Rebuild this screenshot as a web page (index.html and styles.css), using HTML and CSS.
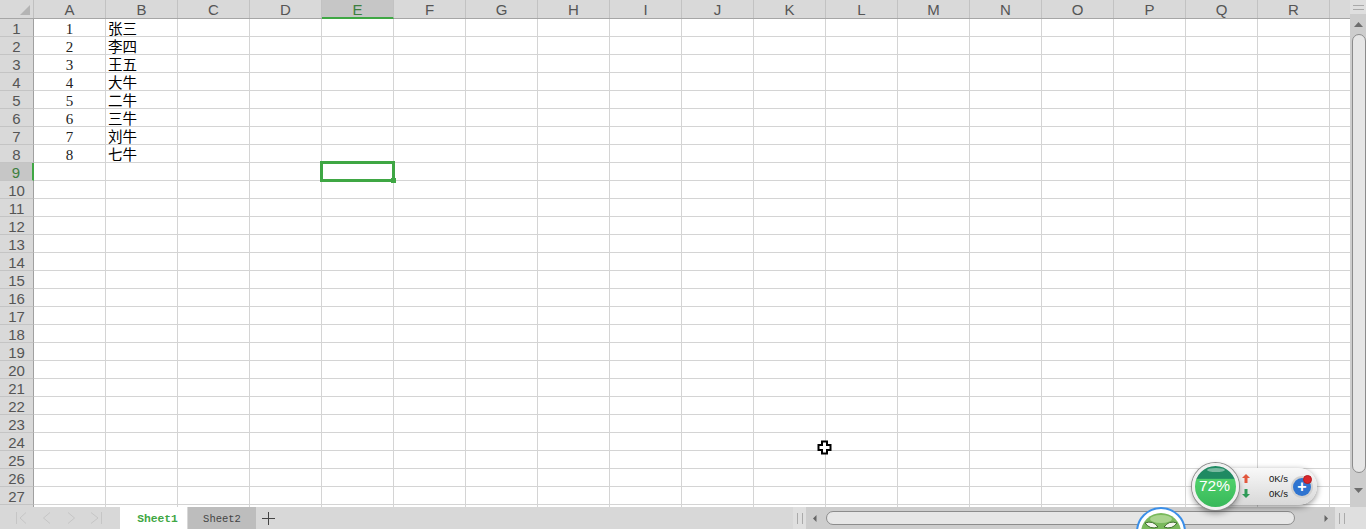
FILE: index.html
```html
<!DOCTYPE html>
<html lang="zh-CN">
<head>
<meta charset="utf-8">
<title>Sheet1</title>
<link rel="stylesheet" href="styles.css">
</head>
<body>
<div class="app">
  <div class="main">
    <div class="grid">
      <div class="colhead">
        <div class="corner"><svg width="12" height="12" viewBox="0 0 12 12"><path d="M11 1V11H1Z" fill="#b4b4b4"/></svg></div>
        <div class="col">A</div><div class="col">B</div><div class="col">C</div><div class="col">D</div>
        <div class="col active">E</div><div class="col">F</div><div class="col">G</div><div class="col">H</div>
        <div class="col">I</div><div class="col">J</div><div class="col">K</div><div class="col">L</div>
        <div class="col">M</div><div class="col">N</div><div class="col">O</div><div class="col">P</div>
        <div class="col">Q</div><div class="col">R</div><div class="col tail"></div>
      </div>
      <div class="rows">
        <div class="row"><div class="rh">1</div><div class="num">1</div><div class="name">张三</div></div>
        <div class="row"><div class="rh">2</div><div class="num">2</div><div class="name">李四</div></div>
        <div class="row"><div class="rh">3</div><div class="num">3</div><div class="name">王五</div></div>
        <div class="row"><div class="rh">4</div><div class="num">4</div><div class="name">大牛</div></div>
        <div class="row"><div class="rh">5</div><div class="num">5</div><div class="name">二牛</div></div>
        <div class="row"><div class="rh">6</div><div class="num">6</div><div class="name">三牛</div></div>
        <div class="row"><div class="rh">7</div><div class="num">7</div><div class="name">刘牛</div></div>
        <div class="row"><div class="rh">8</div><div class="num">8</div><div class="name">七牛</div></div>
        <div class="row"><div class="rh active">9</div></div>
        <div class="row"><div class="rh">10</div></div>
        <div class="row"><div class="rh">11</div></div>
        <div class="row"><div class="rh">12</div></div>
        <div class="row"><div class="rh">13</div></div>
        <div class="row"><div class="rh">14</div></div>
        <div class="row"><div class="rh">15</div></div>
        <div class="row"><div class="rh">16</div></div>
        <div class="row"><div class="rh">17</div></div>
        <div class="row"><div class="rh">18</div></div>
        <div class="row"><div class="rh">19</div></div>
        <div class="row"><div class="rh">20</div></div>
        <div class="row"><div class="rh">21</div></div>
        <div class="row"><div class="rh">22</div></div>
        <div class="row"><div class="rh">23</div></div>
        <div class="row"><div class="rh">24</div></div>
        <div class="row"><div class="rh">25</div></div>
        <div class="row"><div class="rh">26</div></div>
        <div class="row"><div class="rh">27</div></div>
        <div class="row"><div class="rh"></div></div>
      </div>
    </div>
    <div class="vscroll">
      <div class="vsplit"></div>
      <div class="varrow"><svg width="9" height="5" viewBox="0 0 9 5"><path d="M4.500 0L9 5H0Z" fill="#6e6e6e"/></svg></div>
      <div class="vthumb"></div>
      <div class="varrow down"><svg width="9" height="5" viewBox="0 0 9 5"><path d="M0 0H9L4.500 5Z" fill="#6e6e6e"/></svg></div>
    </div>
  </div>
  <div class="tabbar">
    <div class="nav">
      <svg width="120" height="22" viewBox="0 0 120 22" fill="none" stroke="#c6c6c6" stroke-width="1"><path d="M16.500 5V17M26 5.500L20 11L26 16.500M50 5.500L43.500 11L50 16.500M68 5.500L74.500 11L68 16.500M91 5.500L98 11L91 16.500M101.500 5V17"/></svg>
    </div>
    <div class="tab current">Sheet1</div>
    <div class="tab">Sheet2</div>
    <div class="plus"><svg width="13" height="13" viewBox="0 0 13 13"><path d="M6.500 0V13M0 6.500H13" stroke="#444" stroke-width="1"/></svg></div>
    <div class="spacer"></div>
    <div class="hsplit"></div>
    <div class="hscroll">
      <svg class="harrow" width="5" height="9" viewBox="0 0 5 9"><path d="M4.500 1V8L1 4.500Z" fill="#666"/></svg>
      <div class="hthumb"></div>
      <svg class="harrow" width="5" height="9" viewBox="0 0 5 9"><path d="M.5 1V8L4 4.500Z" fill="#666"/></svg>
    </div>
    <div class="hsplit end"></div>
  </div>

  <div class="selection"><span class="handle"></span></div>

  <svg class="cursor" width="15" height="15" viewBox="0 0 15 15"><path d="M5 1.500H10V5H13.500V10H10V13.500H5V10H1.500V5H5Z" fill="#fff" stroke="#000" stroke-width="2"/></svg>

  <div class="mascot">
    <svg width="50" height="50" viewBox="0 0 50 50">
      <circle cx="25" cy="25" r="24" fill="#fff" stroke="#3b8fe8" stroke-width="2"/>
      <circle cx="25" cy="26" r="20" fill="#79b95c"/>
      <ellipse cx="25" cy="12" rx="11" ry="4" fill="#a9d48e"/>
      <path d="M9 16Q17 13 22 20Q14 23 9 16ZM41 16Q33 13 28 20Q36 23 41 16Z" fill="#f4f6ee" stroke="#3c6e2a" stroke-width="1"/>
    </svg>
  </div>

  <div class="widget">
    <div class="ball"><span class="gloss"></span><span class="pct">72%</span></div>
    <div class="speeds">
      <div class="speed"><svg width="8" height="9" viewBox="0 0 8 9"><path d="M4 0L8 4H5.500V9H2.500V4H0Z" fill="#e2583e"/></svg><span>0K/s</span></div>
      <div class="speed"><svg width="8" height="9" viewBox="0 0 8 9"><path d="M4 9L8 5H5.500V0H2.500V5H0Z" fill="#2f9a57"/></svg><span>0K/s</span></div>
    </div>
    <div class="boost"><span class="boost-plus">+</span><span class="dot"></span></div>
  </div>
</div>
</body>
</html>
```
FILE: styles.css
```css
* { box-sizing: border-box; }
html, body { margin: 0; height: 100%; overflow: hidden; }
body { background: #fff; font-family: "Liberation Sans", sans-serif; }

.app { position: relative; width: 1366px; height: 529px; overflow: hidden; display: flex; flex-direction: column; }
.main { display: flex; height: 507px; }

/* Grid */
.grid { width: 1350px; flex: none; overflow: hidden; }
.colhead { display: flex; height: 19px; background: #d9d9d9; border-bottom: 1px solid #a6a6a6; }
.corner { width: 34px; flex: none; border-right: 1px solid #c0c0c0; display: flex; justify-content: flex-end; align-items: flex-start; padding: 4px 2px 0 0; }
.col { width: 72px; flex: none; border-right: 1px solid #c2c2c2; text-align: center; font-size: 15px; line-height: 20px; color: #555; }
.col.tail { width: 20px; border-right: 0; }
.col.active { background: #c6c6c6; color: #3d7f3f; border-bottom: 2px solid #3fa744; height: 19px; }

.rows {
  height: 488px;
  background-color: #fff;
  background-image: linear-gradient(to right, #d4d4d4 1px, transparent 1px);
  background-size: 72px 100%;
  background-position: 33px 0;
}
.row { display: flex; height: 18px; border-bottom: 1px solid #d4d4d4; font-family: "Liberation Serif", "Noto Sans CJK SC", serif; color: #000; }
.rh { width: 34px; flex: none; height: 18px; margin-bottom: -1px; background: #d9d9d9; border-right: 1px solid #a0a0a0; border-bottom: 1px solid #c4c4c4; text-align: center; font-family: "Liberation Sans", sans-serif; font-size: 15px; line-height: 19px; color: #555; }
.rh.active { background: #c6c6c6; color: #3d7f3f; border-right: 2px solid #3fa744; }
.num { width: 71px; flex: none; text-align: center; font-size: 15px; line-height: 20px; color: #222; }
.name { width: 72px; flex: none; padding-left: 3px; font-family: "Noto Sans CJK SC", sans-serif; font-size: 14.500px; line-height: 17px; }

/* Vertical scrollbar */
.vscroll { width: 16px; flex: none; background: #cdcdcd; display: flex; flex-direction: column; align-items: center; }
.vsplit { width: 100%; height: 14px; background: #dfdfdf; border-top: 5px solid #dfdfdf; }
.vsplit::before { content: ""; display: block; width: 11px; height: 3px; margin: 0 auto; border-top: 1px solid #aaa; border-bottom: 1px solid #aaa; }
.varrow { height: 20px; flex: none; display: flex; align-items: center; justify-content: center; }
.vthumb { width: 14px; height: 439px; flex: none; margin-left: 1px; background: #e6e6e6; border: 1px solid #8c8c8c; border-radius: 7px; }
.varrow.down { height: 34px; }

/* Tab bar */
.tabbar { height: 22px; display: flex; align-items: stretch; background: #d8d8d8; }
.nav { width: 120px; flex: none; }
.tab { width: 68px; flex: none; background: #bdbdbd; text-align: center; font-family: "Liberation Mono", monospace; font-size: 10.500px; line-height: 24px; color: #444; }
.tab.current { background: #fff; color: #3fa744; font-weight: 700; font-size: 11.300px; padding-left: 8px; border-right: 1px solid #d8d8d8; }
.plus { width: 24px; flex: none; display: flex; align-items: center; justify-content: center; }
.spacer { width: 513px; flex: none; }
.hsplit { width: 13px; flex: none; position: relative; background: #dfdfdf; }
.hsplit::before { content: ""; position: absolute; left: 4px; top: 6px; width: 4px; height: 11px; border-left: 1px solid #aaa; border-right: 1px solid #aaa; }
.hsplit.end { width: 31px; }
.hscroll { width: 529px; flex: none; background: #cdcdcd; display: flex; align-items: center; padding: 0 6px; }
.hthumb { width: 469px; height: 14px; margin: 0 29px 0 9px; background: #e6e6e6; border: 1px solid #8c8c8c; border-radius: 7px; }

/* Overlays */
.selection { position: absolute; left: 320px; top: 161px; width: 75px; height: 21px; border: 3px solid #3fa744; }
.selection .handle { position: absolute; right: -4px; bottom: -4px; width: 5px; height: 5px; background: #3fa744; }
.cursor { position: absolute; left: 817px; top: 440px; }
.mascot { position: absolute; left: 1136px; top: 507px; }

.widget { position: absolute; left: 1191px; top: 462px; width: 126px; height: 48px; }
.widget::before { content: ""; position: absolute; left: 24px; top: 6px; width: 102px; height: 37px; border-radius: 19px; background: linear-gradient(#f8f8f8, #d8d8d8); box-shadow: 0 2px 6px rgba(0,0,0,.45); }
.ball { position: absolute; left: 1px; top: 1px; width: 47px; height: 47px; border-radius: 50%; background: linear-gradient(#1f8a62 0, #1f8a62 30%, #4fd06a 33%, #37b85a 100%); border: 3px solid #f0f0f0; box-shadow: 0 0 0 1px #8d8d8d, 0 3px 6px rgba(0,0,0,.4); display: flex; align-items: center; justify-content: center; overflow: hidden; }
.gloss { position: absolute; left: 12px; top: 2px; width: 18px; height: 4px; border-radius: 50%; background: rgba(255,255,255,.4); }
.pct { position: relative; left: -1px; top: -1px; color: #fff; font-size: 15.500px; line-height: 1; }
.speeds { position: absolute; left: 51px; top: 11px; width: 46px; display: flex; flex-direction: column; gap: 4px; }
.speed { display: flex; align-items: center; justify-content: space-between; height: 11px; font-size: 9.500px; color: #111; }
.boost { position: absolute; left: 102px; top: 16px; width: 18px; height: 18px; border-radius: 50%; background: #2f74d0; box-shadow: 0 0 0 2px #d0d0d0; text-align: center; color: #fff; font-size: 16px; font-weight: 700; line-height: 18px; }
.boost-plus { display: block; }
.dot { position: absolute; right: -1px; top: -3px; width: 9px; height: 9px; border-radius: 50%; background: #d9262c; border: 1px solid #b51c20; }
```
